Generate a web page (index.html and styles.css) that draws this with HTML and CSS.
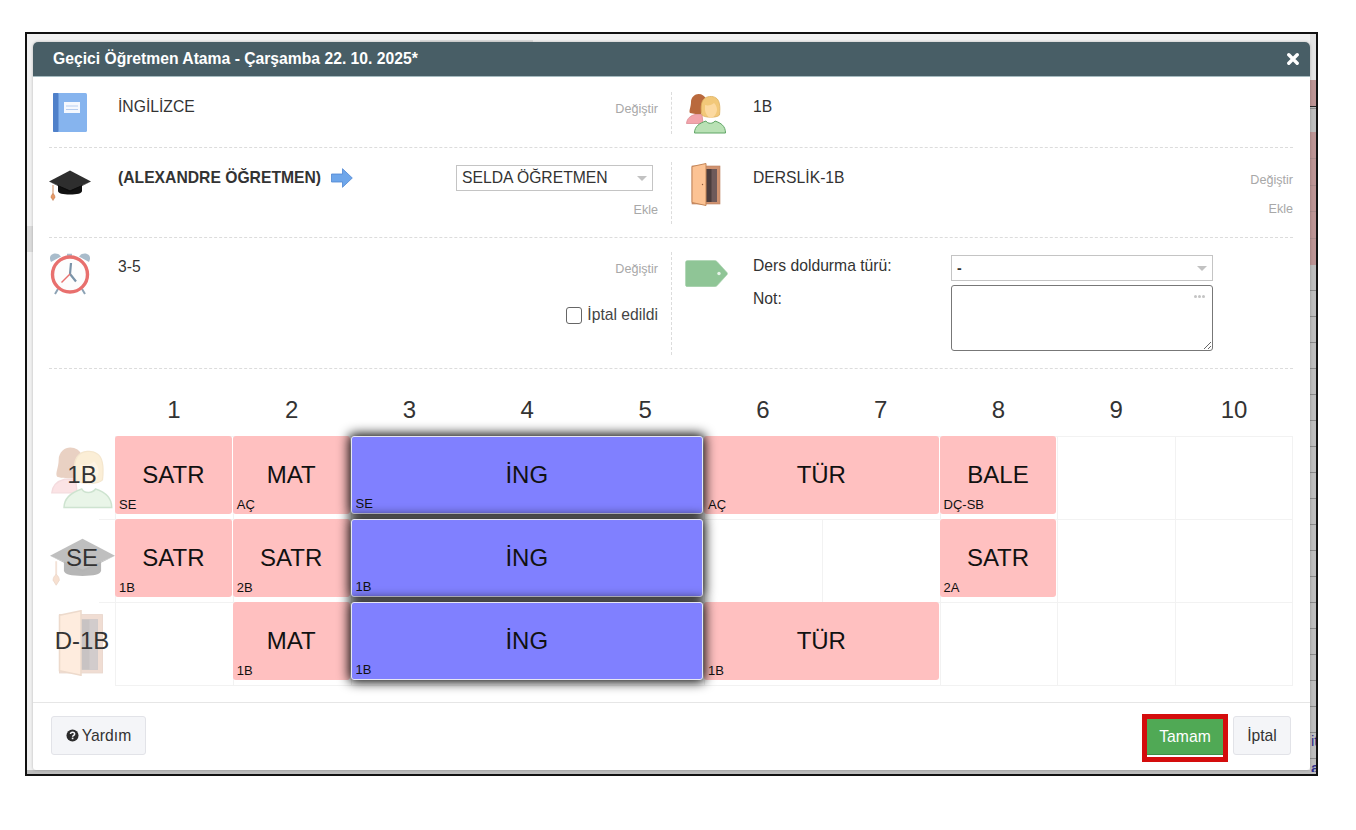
FILE: index.html
```html
<!DOCTYPE html>
<html lang="tr">
<head>
    <meta charset="UTF-8">
    <meta name="viewport" content="width=device-width, initial-scale=1.0">
    <title>Geçici Öğretmen Atama</title>
    <link rel="stylesheet" href="styles.css">
</head>
<body>
    <!-- icons, used in the form and again faded behind the timetable labels -->
    <svg class="svg-defs" xmlns="http://www.w3.org/2000/svg">
        <symbol id="ic-book" viewBox="0 0 34 39">
            <rect x="0" y="0" width="34" height="39" rx="1.5" fill="#86b4ee"/>
            <rect x="0" y="0" width="5.5" height="39" rx="1" fill="#4f80c9"/>
            <rect x="11" y="9" width="16" height="11" fill="#f4f8fe"/>
            <path d="M13 13h12M13 16.5h12" stroke="#b5cdf0" stroke-width="1.2"/>
        </symbol>
        <symbol id="ic-cap" viewBox="0 0 42 31">
            <path d="M4 15v9" stroke="#d9a27c" stroke-width="1.2"/>
            <path d="M4 23.5c1.4 1 2 2.500 2 3.800l-2 3.200-2-3.200c0-1.300.6-2.800 2-3.800z" fill="#e79a68" stroke="#b9744a" stroke-width=".5"/>
            <path d="M9 13v8c0 2.500 5 3.500 12 3.500s12-1 12-3.500v-8z" fill="#111"/>
            <path d="M0 11.500 21 .5l21 11-21 9z" fill="#2e2e2e"/>
            <path d="M0 11.500 21 20.500l21-9-21 10.500z" fill="#0c0c0c"/>
        </symbol>
        <symbol id="ic-clock" viewBox="0 0 42 42">
            <path d="M2 9C0 5 1 2 4 1c3-1 6 0 8 2.500zM40 9c2-4 1-7-2-8-3-1-6 0-8 2.500z" fill="#a9bccb"/>
            <path d="M18 2h5" stroke="#a9bccb" stroke-width="2.500"/>
            <path d="M9 36l-3 5M33 36l3 5" stroke="#8da3b5" stroke-width="2"/>
            <circle cx="21" cy="21.500" r="17.500" fill="#fdfdfd" stroke="#e8706e" stroke-width="3.400"/>
            <path d="M21 21l1-11M21 21l6 7.500" stroke="#7a93a8" stroke-width="2.200" fill="none"/>
            <path d="M21 21l-8.500 8.500" stroke="#e8706e" stroke-width="1.400"/>
        </symbol>
        <symbol id="ic-people" viewBox="0 0 41 41">
            <path d="M.5 30.500C1 25 5 22.500 9 21.500h7l1 9z" fill="#f2a4ab" stroke="#dc8b93" stroke-width=".8"/>
            <path d="M4 20c-1.500-2 1-6 1-11C5 4 9 1 12.500 1 16 1 19 3 20 6l-5 15c-3 0-8 0-11-1z" fill="#b9693d"/>
            <path d="M8.500 40c0-7 5.500-10 11.500-12 1.500 3 7 3 9 0 6 2 10.500 5 10.500 12z" fill="#b9e1b5" stroke="#5fa565" stroke-width="1"/>
            <path d="M16 22c-1.500-5-1-13 1.500-15.500C20 3 27 2.500 30 5c3.500 2 4.500 8 3.500 17-2.500 3-14.500 3-17.500 0z" fill="#f2c879" stroke="#dcae5e" stroke-width=".8"/>
            <path d="M19 12c3 1 7 0 9-2 2 2 3 4 3 7-.5 4-3.500 8-6 8s-5.500-4-6-8z" fill="#fcd9a0"/>
        </symbol>
        <symbol id="ic-door" viewBox="0 0 30 43">
            <rect x="1" y="3" width="28" height="38" fill="#cf9270" stroke="#bb7f5e" stroke-width=".6"/>
            <rect x="14" y="6" width="12" height="33" fill="#4b3d3d"/>
            <rect x="20.500" y="6" width="5.500" height="33" fill="#6e5a5a"/>
            <path d="M1 3.500 15 .5v42l-14-3z" fill="#fcc394" stroke="#c48658" stroke-width="1"/>
            <circle cx="11.500" cy="21.500" r=".7" fill="#8a5a3c"/>
        </symbol>
        <symbol id="ic-tag" viewBox="0 0 43 27">
            <path d="M2.500.5h27c1 0 1.800.3 2.500 1l10 11c.6.700.6 1.600 0 2.300l-10 11c-.7.700-1.500 1-2.500 1h-27C1.400 26.800.5 26 .5 25V2.500C.5 1.400 1.400.5 2.500.5z" fill="#8fc596" stroke="#a8d2ad" stroke-width=".6"/>
            <circle cx="34" cy="13.500" r="1.700" fill="#e6f3e8"/>
        </symbol>
    </svg>

    <div class="frame">
        <span class="peek peek-1">it</span>
        <span class="peek peek-2">ar</span>

        <div class="dialog">
            <div class="dialog-head">
                <span class="dialog-title">Geçici Öğretmen Atama - Çarşamba 22. 10. 2025*</span>
                <svg class="close-x" viewBox="0 0 12 12"><path d="M1.800 1.800l8.400 8.400M10.200 1.800l-8.400 8.400" stroke="#fff" stroke-width="3.400" stroke-linecap="round"/></svg>
            </div>

            <div class="form">
                <div class="form-row row-1">
                    <div class="cell cell-left">
                        <div class="icon-slot"><svg class="ic ic-book"><use href="#ic-book"/></svg></div>
                        <div class="value">İNGİLİZCE</div>
                        <div class="actions"><a class="action">Değiştir</a></div>
                    </div>
                    <div class="cell cell-right">
                        <div class="icon-slot"><svg class="ic ic-people"><use href="#ic-people"/></svg></div>
                        <div class="value">1B</div>
                    </div>
                </div>

                <div class="form-row row-2">
                    <div class="cell cell-left">
                        <div class="icon-slot"><svg class="ic ic-cap"><use href="#ic-cap"/></svg></div>
                        <div class="value teacher">
                            <b>(ALEXANDRE ÖĞRETMEN)</b>
                            <svg class="arrow" viewBox="0 0 22 20"><path d="M.5 6h11V.7L21.300 10l-9.800 9.300V14H.5z" fill="#6ea6ea" stroke="#4f86d2" stroke-width=".8"/></svg>
                        </div>
                        <div class="actions">
                            <div class="select select-teacher">SELDA ÖĞRETMEN<i class="caret"></i></div>
                            <a class="action action-add">Ekle</a>
                        </div>
                    </div>
                    <div class="cell cell-right">
                        <div class="icon-slot"><svg class="ic ic-door"><use href="#ic-door"/></svg></div>
                        <div class="value">DERSLİK-1B</div>
                        <div class="actions actions-room">
                            <a class="action">Değiştir</a>
                            <a class="action action-add">Ekle</a>
                        </div>
                    </div>
                </div>

                <div class="form-row row-3">
                    <div class="cell cell-left">
                        <div class="icon-slot"><svg class="ic ic-clock"><use href="#ic-clock"/></svg></div>
                        <div class="value">3-5</div>
                        <div class="actions">
                            <a class="action">Değiştir</a>
                            <label class="cancelled"><input type="checkbox" class="chk">İptal edildi</label>
                        </div>
                    </div>
                    <div class="cell cell-right">
                        <div class="icon-slot"><svg class="ic ic-tag"><use href="#ic-tag"/></svg></div>
                        <div class="fields">
                            <label class="field-label">Ders doldurma türü:</label>
                            <div class="select select-fill">-<i class="caret"></i></div>
                            <label class="field-label">Not:</label>
                            <div class="note">
                                <textarea class="note-input"></textarea>
                                <span class="note-dots"><i></i><i></i><i></i></span>
                            </div>
                        </div>
                    </div>
                </div>
            </div>

            <div class="tt">
                <div class="tt-head">
                    <span></span>
                    <span>1</span><span>2</span><span>3</span><span>4</span><span>5</span>
                    <span>6</span><span>7</span><span>8</span><span>9</span><span>10</span>
                </div>

                <div class="tt-row">
                    <div class="tt-label"><svg class="tt-mark mark-people"><use href="#ic-people"/></svg><span>1B</span></div>
                    <div class="tt-cell"><div class="card"><span class="card-name">SATR</span><span class="card-sub">SE</span></div></div>
                    <div class="tt-cell"><div class="card"><span class="card-name">MAT</span><span class="card-sub">AÇ</span></div></div>
                    <div class="tt-cell span-3 is-now"><div class="card card-now"><span class="card-name">İNG</span><span class="card-sub">SE</span></div></div>
                    <div class="tt-cell span-2"><div class="card"><span class="card-name">TÜR</span><span class="card-sub">AÇ</span></div></div>
                    <div class="tt-cell"><div class="card"><span class="card-name">BALE</span><span class="card-sub">DÇ-SB</span></div></div>
                    <div class="tt-cell"></div>
                    <div class="tt-cell"></div>
                </div>

                <div class="tt-row">
                    <div class="tt-label"><svg class="tt-mark mark-cap"><use href="#ic-cap"/></svg><span>SE</span></div>
                    <div class="tt-cell"><div class="card"><span class="card-name">SATR</span><span class="card-sub">1B</span></div></div>
                    <div class="tt-cell"><div class="card"><span class="card-name">SATR</span><span class="card-sub">2B</span></div></div>
                    <div class="tt-cell span-3 is-now"><div class="card card-now"><span class="card-name">İNG</span><span class="card-sub">1B</span></div></div>
                    <div class="tt-cell"></div>
                    <div class="tt-cell"></div>
                    <div class="tt-cell"><div class="card"><span class="card-name">SATR</span><span class="card-sub">2A</span></div></div>
                    <div class="tt-cell"></div>
                    <div class="tt-cell"></div>
                </div>

                <div class="tt-row">
                    <div class="tt-label"><svg class="tt-mark mark-door"><use href="#ic-door"/></svg><span>D-1B</span></div>
                    <div class="tt-cell"></div>
                    <div class="tt-cell"><div class="card"><span class="card-name">MAT</span><span class="card-sub">1B</span></div></div>
                    <div class="tt-cell span-3 is-now"><div class="card card-now"><span class="card-name">İNG</span><span class="card-sub">1B</span></div></div>
                    <div class="tt-cell span-2"><div class="card"><span class="card-name">TÜR</span><span class="card-sub">1B</span></div></div>
                    <div class="tt-cell"></div>
                    <div class="tt-cell"></div>
                    <div class="tt-cell"></div>
                </div>
            </div>

            <div class="dialog-foot">
                <button class="btn btn-help">
                    <svg class="help-ic" viewBox="0 0 14 14"><circle cx="7" cy="7" r="6.500" fill="#2b2b2b"/><path d="M4.800 5.400C4.900 4.100 5.800 3.400 7.100 3.400c1.300 0 2.200.8 2.200 1.900 0 1.700-2.200 1.600-2.200 3.100" fill="none" stroke="#f4f5f8" stroke-width="1.600"/><rect x="6.200" y="9.300" width="1.800" height="1.700" fill="#f4f5f8"/></svg>
                    Yardım
                </button>
                <div class="foot-right">
                    <div class="highlight"><button class="btn btn-ok">Tamam</button></div>
                    <button class="btn btn-cancel">İptal</button>
                </div>
            </div>
        </div>
    </div>
</body>
</html>
```

FILE: styles.css
```css
* {
    box-sizing: border-box;
}

body {
    margin: 0;
    background-color: #fff;
    font-family: "Liberation Sans", Arial, sans-serif;
    font-size: 15.7px;
    color: #333;
}

.svg-defs {
    display: none;
}

/* black screenshot border with the page behind the dialog peeking out */
.frame {
    position: relative;
    width: 1293px;
    height: 744px;
    margin: 32px 0 0 25px;
    padding: 8px 6px 4px;
    border: 2px solid #111;
    overflow: hidden;
    background-color: #f1f1f1;
    background-image:
        linear-gradient(to bottom, #e2e2e2 0, #e2e2e2 46px, #bc9494 46px, #bc9494 72px, #222 72px, #222 73px, transparent 73px, transparent 98px, #bc9494 98px, #bc9494 124px, #a98a8a 124px, #a98a8a 125px, #bc9494 125px, #bc9494 151px, #a98a8a 151px, #a98a8a 152px, #bc9494 152px, #bc9494 177px, #a98a8a 177px, #a98a8a 178px, #bc9494 178px, #bc9494 204px, #a98a8a 204px, #a98a8a 205px, #bc9494 205px, #bc9494 231px, transparent 231px),
        repeating-linear-gradient(to bottom, #bdbdbd 0, #bdbdbd 22px, #8a8a8a 22px, #8a8a8a 23px, #bdbdbd 23px, #bdbdbd 26px),
        linear-gradient(to bottom, #bdbdbd, #bdbdbd),
        linear-gradient(to bottom, transparent 192px, #dcdcdc 192px, #dcdcdc 218px, transparent 218px),
        linear-gradient(to right, transparent 393px, #dedede 393px, #dedede 506px, transparent 506px);
    background-size: 6px 100%, 6px 100%, 100% 4px, 6px 100%, 100% 2px;
    background-position: right top, right top, left bottom, left top, left 6px;
    background-repeat: no-repeat;
}

.peek {
    position: absolute;
    left: 1284px;
    width: 6px;
    overflow: hidden;
    font-size: 15px;
    color: #2c2c8c;
}

.peek-1 {
    top: 698px;
}

.peek-2 {
    top: 725px;
    height: 13px;
    font-weight: bold;
}

.dialog {
    position: relative;
    display: flex;
    flex-direction: column;
    height: 728px;
    background-color: #fff;
    border-radius: 5px 5px 3px 3px;
    box-shadow: 0 0 3px rgba(0, 0, 0, 0.25);
}

.dialog-head {
    display: flex;
    align-items: center;
    justify-content: space-between;
    height: 35px;
    padding: 0 11px 0 20px;
    background-color: #485e66;
    border-bottom: 1px solid #a6bbc0;
    border-radius: 5px 5px 0 0;
    color: #fff;
}

.dialog-title {
    font-weight: bold;
}

.close-x {
    width: 12px;
    height: 12px;
}

/* form */
.form {
    padding: 0 17px 0 16px;
}

.form-row {
    display: grid;
    grid-template-columns: 622px 1fr;
    border-bottom: 1px dashed #dcdcdc;
}

.row-1 {
    padding: 15px 0 13px;
}

.row-2 {
    padding: 14px 0 13px;
}

.row-3 {
    padding: 14px 0 13px;
}

.cell {
    display: flex;
    min-height: 42px;
}

.row-2 .cell {
    min-height: 62px;
}

.row-3 .cell {
    min-height: 103px;
}

.cell-right {
    padding-left: 12px;
    border-left: 1px dashed #dcdcdc;
}

.icon-slot {
    flex: none;
    display: flex;
    justify-content: center;
    align-items: flex-start;
    width: 42px;
    margin-right: 27px;
}

.cell-right .icon-slot {
    width: 44px;
    margin-right: 25px;
}

.ic-book {
    width: 34px;
    height: 39px;
    margin-top: 1px;
}

.ic-cap {
    width: 42px;
    height: 31px;
    margin-top: 8px;
}

.ic-clock {
    width: 42px;
    height: 42px;
    margin-top: 1px;
}

.ic-people {
    width: 41px;
    height: 41px;
    margin-top: 1px;
}

.ic-door {
    width: 30px;
    height: 43px;
    margin-top: 1px;
}

.ic-tag {
    width: 43px;
    height: 27px;
    margin-top: 8px;
}

.value {
    flex: 1;
    padding-top: 5px;
    line-height: 20px;
    color: #333;
}

.row-2 .value {
    padding-top: 6px;
}

.teacher {
    display: flex;
    align-items: flex-start;
    gap: 10px;
}

.arrow {
    width: 22px;
    height: 20px;
}

.actions {
    flex: none;
    display: flex;
    flex-direction: column;
    align-items: flex-end;
    padding-right: 13px;
}

.actions-room {
    padding-right: 0;
}

.action {
    margin-top: 10px;
    font-size: 12.6px;
    line-height: 14px;
    color: #a8a8a8;
}

.actions-room .action {
    margin-top: 11px;
}

.actions-room .action-add {
    margin-top: 15px;
}

.action-add {
    margin-top: 12px;
}

.select {
    position: relative;
    height: 26px;
    padding-left: 5px;
    border: 1px solid #c4c4c4;
    line-height: 24px;
    background-color: #fff;
    color: #333;
}

.select-teacher {
    width: 197px;
    margin: 3px 5px 0 0;
}

.caret {
    position: absolute;
    top: 10px;
    right: 5px;
    border: 5px solid transparent;
    border-top: 5px solid #c2c2c2;
    border-bottom: 0;
}

.cancelled {
    display: flex;
    align-items: center;
    gap: 5px;
    margin-top: 29px;
    line-height: 20px;
    color: #444;
}

.chk {
    appearance: none;
    width: 16px;
    height: 17px;
    margin: 0;
    border: 1px solid #666;
    border-radius: 3px;
    background-color: #fff;
}

.fields {
    display: grid;
    grid-template-columns: 198px 262px;
    grid-template-rows: 26px 66px;
    row-gap: 7px;
    align-content: start;
    margin-top: 3px;
}

.field-label {
    padding-top: 1px;
    line-height: 20px;
    color: #333;
}

.select-fill {
    font-size: 14px;
    font-weight: bold;
}

.note {
    position: relative;
    height: 66px;
    margin-top: -3px;
}

.note-input {
    display: block;
    width: 262px;
    height: 66px;
    border: 1px solid #777;
    border-radius: 3px;
    outline: none;
}

.note-dots {
    position: absolute;
    top: 10px;
    right: 8px;
    display: flex;
    gap: 1px;
}

.note-dots i {
    width: 3px;
    height: 3px;
    border-radius: 50%;
    background-color: #c4c4c4;
}

/* timetable */
.tt {
    padding: 23px 17px 0 16px;
}

.tt-head,
.tt-row {
    display: grid;
    grid-template-columns: 66px repeat(10, 1fr);
}

.tt-head {
    height: 44px;
    padding-bottom: 8px;
    align-items: center;
    text-align: center;
    font-size: 24px;
    color: #333;
}

.tt-row {
    height: 83px;
}

.tt-row:last-child {
    height: 84px;
}

.tt-label {
    position: relative;
    display: flex;
    align-items: center;
    justify-content: center;
    height: 78px;
    font-size: 24px;
    color: #333;
}

.tt-row + .tt-row .tt-label::before {
    content: "";
    position: absolute;
    top: 0;
    right: 0;
    width: 16px;
    height: 1px;
    background-color: #f2f2f2;
}

.tt-label span {
    position: relative;
}

.tt-mark {
    position: absolute;
    opacity: 0.3;
}

.mark-people {
    top: 10px;
    left: 2px;
    width: 63px;
    height: 63px;
}

.mark-cap {
    top: 19px;
    left: 1px;
    width: 65px;
    height: 48px;
}

.mark-door {
    top: 8px;
    left: 8px;
    width: 48px;
    height: 66px;
}

.tt-cell {
    padding: 0 1px 5px 0;
    border-top: 1px solid #f2f2f2;
    border-left: 1px solid #f2f2f2;
}

.tt-cell:last-child {
    border-right: 1px solid #f2f2f2;
}

.tt-row:last-child .tt-cell {
    border-bottom: 1px solid #f2f2f2;
}

.span-2 {
    grid-column: span 2;
}

.span-3 {
    grid-column: span 3;
}

.card {
    position: relative;
    display: flex;
    align-items: center;
    justify-content: center;
    height: 78px;
    margin: -1px 0 0 -1px;
    border-radius: 3px;
    background-color: #ffc0c0;
    color: #111;
    font-size: 24px;
}

.card-now {
    z-index: 1;
    background-color: #8080ff;
    border: 1px solid #e6e6f4;
    box-shadow: 0 0 12px 2px #000;
}

.card-sub {
    position: absolute;
    left: 4px;
    bottom: 2px;
    font-size: 13px;
    line-height: 14px;
}

/* footer */
.dialog-foot {
    display: flex;
    justify-content: space-between;
    align-items: flex-start;
    flex: 1;
    margin-top: 16px;
    padding: 13px 19px 0 18px;
    border-top: 1px solid #e6e6e6;
}

.btn {
    height: 39px;
    border: 1px solid #e2e3e8;
    border-radius: 3px;
    background-color: #f4f5f8;
    font-family: inherit;
    font-size: 15.7px;
    color: #333;
}

.btn-help {
    display: flex;
    align-items: center;
    justify-content: center;
    gap: 3px;
    width: 95px;
    padding: 0;
}

.help-ic {
    width: 13px;
    height: 13px;
}

.foot-right {
    display: flex;
    align-items: flex-start;
    gap: 5px;
}

.highlight {
    height: 48px;
    margin-top: -2px;
    border: 5px solid #d40d0d;
    background-color: #fff;
}

.btn-ok {
    display: block;
    width: 76px;
    height: 36px;
    padding: 0;
    border: 0;
    border-bottom: 1px solid #3e8d45;
    border-radius: 0;
    background-color: #50a955;
    color: #fff;
}

.btn-cancel {
    width: 58px;
    padding: 0;
}
```
